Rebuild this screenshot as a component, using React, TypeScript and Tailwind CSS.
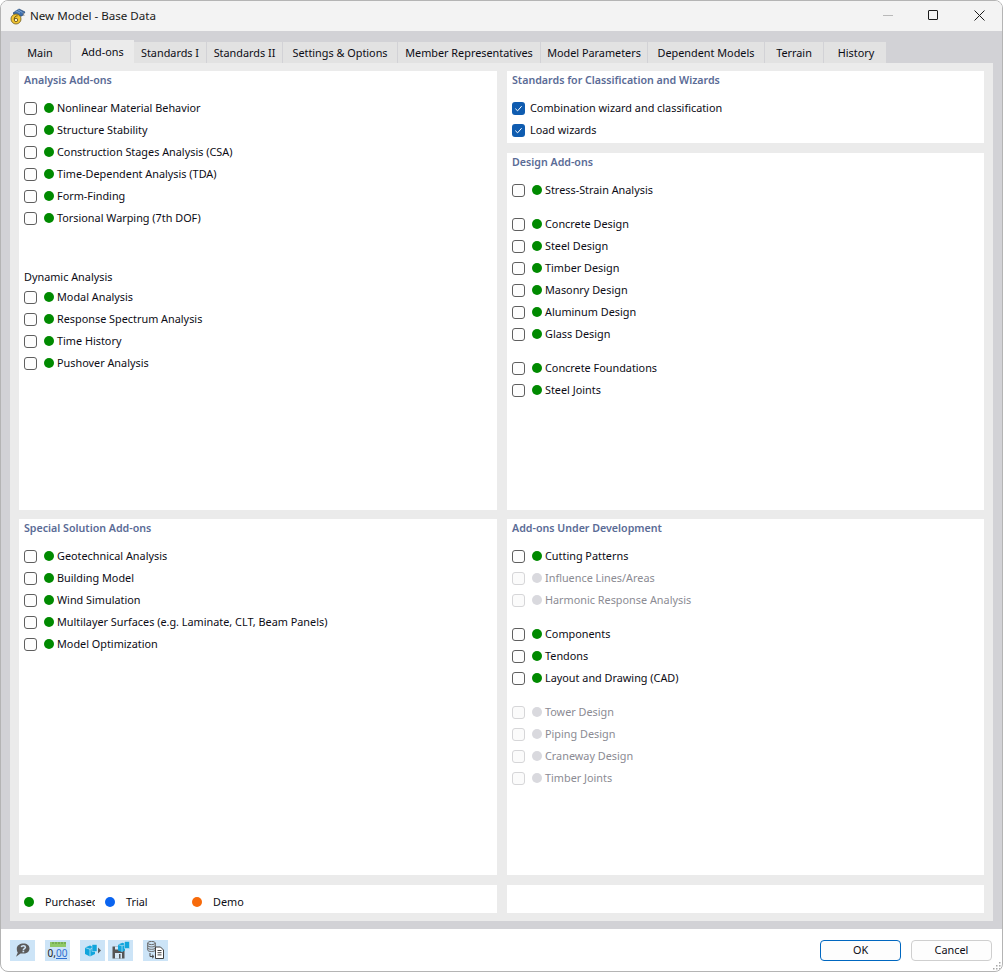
import type { ReactNode } from "react"

const tabs = [
  { name: "Main", w: "w-[61px]" },
  { name: "Add-ons", w: "w-[63px]", active: true },
  { name: "Standards I", w: "w-[73px]" },
  { name: "Standards II", w: "w-[76px]" },
  { name: "Settings & Options", w: "w-[115px]" },
  { name: "Member Representatives", w: "w-[143px]" },
  { name: "Model Parameters", w: "w-[107px]" },
  { name: "Dependent Models", w: "w-[117px]" },
  { name: "Terrain", w: "w-[59px]" },
  { name: "History", w: "w-[63px] pl-[2px]" },
]

function Check({ checked, off }: { checked?: boolean; off?: boolean }) {
  if (checked) {
    return (
      <span className="flex h-[13px] w-[13px] shrink-0 items-center justify-center rounded-[3px] bg-[#0f5cb0]">
        <svg width="9" height="9" viewBox="0 0 10 10" fill="none" stroke="#ffffff" strokeWidth="1.1">
          <path d="M1.5 5.2 L4 7.6 L8.5 2.4" />
        </svg>
      </span>
    )
  }
  return (
    <span
      className={`h-[13px] w-[13px] shrink-0 rounded-[3px] border ${
        off ? "border-[#d6d6d8] bg-[#fbfbfb]" : "border-[#5f5f5f] bg-[#fdfdfd]"
      }`}
    />
  )
}

function Row({ label, off, plain, checked }: { label: string; off?: boolean; plain?: boolean; checked?: boolean }) {
  return (
    <div className="flex h-[22px] items-center">
      <Check off={off} checked={checked} />
      {!plain && (
        <span className={`ml-[7px] h-[10px] w-[10px] shrink-0 rounded-full ${off ? "bg-[#d9d9de]" : "bg-[#008a00]"}`} />
      )}
      <span className={`whitespace-nowrap ${plain ? "ml-[5px]" : "ml-[3px]"} ${off ? "text-[#8b8b93]" : "text-[#0c0c14]"}`}>
        {label}
      </span>
    </div>
  )
}

function Panel({ title, className, children }: { title?: string; className: string; children?: ReactNode }) {
  return (
    <section className={`bg-white pl-[5px] ${className}`}>
      {title && (
        <h2 className="mb-[8px] flex h-[18px] items-center pt-[2px] text-[10.65px] font-semibold text-[#5a6b96]">{title}</h2>
      )}
      {children}
    </section>
  )
}

function Group({ items, off, className = "" }: { items: string[]; off?: boolean; className?: string }) {
  return (
    <div className={className}>
      {items.map((item) => (
        <Row key={item} label={item} off={off} />
      ))}
    </div>
  )
}

function AppIcon() {
  return (
    <svg width="17" height="17" viewBox="0 0 17 17">
      <path d="M4 5 L10 1 L16 4 L13 8 L7 8 Z" fill="#3f6fae" stroke="#23456f" strokeWidth="0.7" />
      <path d="M6 2.5 L11 5 M8.5 1.5 L13.5 4.5" stroke="#9cc0e6" strokeWidth="0.7" />
      <path d="M14 4.5 L15 8" stroke="#8a8a8a" strokeWidth="1" />
      <circle cx="7" cy="11" r="5" fill="#f3c531" stroke="#6d5a1e" strokeWidth="0.8" />
      <circle cx="7" cy="12" r="1.7" fill="#fff3c0" stroke="#5b4a14" strokeWidth="0.8" />
      <path d="M5.2 11.5 C5.2 9 6.5 7.8 8.6 7.8" fill="none" stroke="#5b4a14" strokeWidth="0.9" />
    </svg>
  )
}

function HelpIcon() {
  return (
    <svg width="15" height="14" viewBox="0 0 15 14">
      <path d="M8.5 0.5 C12 0.5 14.5 2.5 14.5 5.5 C14.5 8.6 12 10.5 8.5 10.5 L5.5 10.5 L1 13.8 L2.8 9.5 C2 8.5 1.8 7 1.8 5.5 C1.8 2.5 5 0.5 8.5 0.5 Z" fill="#5b5b5b" />
      <path d="M6.3 4.2 C6.5 2.4 10.3 2.2 10.4 4.2 C10.5 5.6 8.4 5.6 8.3 7" fill="none" stroke="#cfe4f6" strokeWidth="1.5" />
      <rect x="7.5" y="7.6" width="1.7" height="1.7" fill="#cfe4f6" />
    </svg>
  )
}

function UnitsIcon() {
  return (
    <span className="flex h-[17px] w-[17px] flex-col items-center">
      <svg width="16" height="5" viewBox="0 0 16 5" className="shrink-0">
        <rect x="0" y="0" width="16" height="5" fill="#8fc866" />
        <path d="M3 0 V2 M6 0 V2 M9 0 V2 M12 0 V2 M15 0 V2" stroke="#5f9440" strokeWidth="1" />
      </svg>
      <span className="mt-[1px] flex h-[11px] text-[10px] leading-[10px] text-[#1a1a1a]">
        0,<span className="border-b border-[#2f6fd0] text-[#2f6fd0]">00</span>
      </span>
    </span>
  )
}

function ExportIcon() {
  return (
    <svg width="16" height="13" viewBox="0 0 16 13">
      <path d="M0 3.5 L5 1.5 L10 3.5 L10 10 L5 12.5 L0 10 Z" fill="#12a5dc" />
      <path d="M5 5.2 V12.5 M0 3.5 L5 5.2 L10 3.5" stroke="#d6ecf8" strokeWidth="0.7" fill="none" />
      <rect x="7" y="0.5" width="5" height="7" fill="#12a5dc" stroke="#d6ecf8" strokeWidth="0.5" />
      <path d="M13 3.5 L16 6.5 L13 9.5 Z" fill="#5f5f5f" />
    </svg>
  )
}

function SaveIcon() {
  return (
    <svg width="18" height="18" viewBox="0 0 18 18">
      <path d="M0.5 5.5 H10 L12.5 8 V17.5 H0.5 Z" fill="#555555" />
      <rect x="3" y="5.5" width="5" height="3" fill="#d6e8f7" />
      <rect x="3" y="12" width="7" height="5.5" fill="#d6e8f7" />
      <rect x="7" y="13" width="1.5" height="4.5" fill="#555555" />
      <path d="M6 3.5 L10.5 1.8 L13 2.8 L13 9.5 L10 11 L6 9.5 Z" fill="#12a5dc" />
      <path d="M10 4.8 V11 M6 3.5 L10 4.8 L13 3.8" stroke="#d6ecf8" strokeWidth="0.6" fill="none" />
      <rect x="12.5" y="0.5" width="5" height="7" fill="#12a5dc" stroke="#d6ecf8" strokeWidth="0.5" />
    </svg>
  )
}

function DbReportIcon() {
  return (
    <svg width="17" height="18" viewBox="0 0 17 18">
      <ellipse cx="4.5" cy="2" rx="3.8" ry="1.6" fill="none" stroke="#6a6a6a" strokeWidth="1" />
      <path d="M0.7 2 V9 C0.7 11 8.3 11 8.3 9 V2 M0.7 4.4 C0.7 6.4 8.3 6.4 8.3 4.4 M0.7 6.8 C0.7 8.8 8.3 8.8 8.3 6.8" fill="none" stroke="#6a6a6a" strokeWidth="1" />
      <path d="M3 12 V15.5 H6.5 M5 13.8 L7 15.5 L5 17.2" fill="none" stroke="#4a4a4a" strokeWidth="1" />
      <path d="M8.5 6 H13.5 L16.5 9 V17.5 H8.5 Z" fill="#ffffff" stroke="#3f3f3f" strokeWidth="1" />
      <path d="M10.5 9.5 H14.5 M10.5 11.7 H14.5 M10.5 13.9 H14.5" stroke="#3f3f3f" strokeWidth="1" />
    </svg>
  )
}

function ToolButton({ children, className = "" }: { children: ReactNode; className?: string }) {
  return (
    <button className={`flex h-[21px] w-[25px] items-center justify-center bg-[#cce4f7] ${className}`}>{children}</button>
  )
}

export default function App() {
  return (
    <div className="h-[972px] w-[1003px] bg-white font-['Noto_Sans',sans-serif] text-[10.85px] text-[#0c0c14]">
      <div className="relative flex h-full flex-col overflow-hidden rounded-[8px] border border-[#b4b4b4] bg-white">
        {/* title bar */}
        <header className="flex h-[30px] shrink-0 items-center bg-[#f3f3f3] pl-[8px]">
          <AppIcon />
          <span className="ml-[4px] text-[11.6px] text-[#1a1a1a]">New Model - Base Data</span>
          <div className="-mt-[2px] ml-auto flex items-center">
            <span className="mr-[35px] h-px w-[10px] bg-[#b9b9b9]" />
            <span className="mr-[36px] h-[10px] w-[10px] rounded-[1px] border border-[#1a1a1a]" />
            <svg width="11" height="11" viewBox="0 0 11 11" className="mr-[17px]" stroke="#1a1a1a" strokeWidth="1">
              <path d="M0.5 0.5 L10.5 10.5 M10.5 0.5 L0.5 10.5" />
            </svg>
          </div>
        </header>

        {/* dialog body */}
        <main className="flex h-[898px] shrink-0 flex-col bg-[#d2d2d6] px-[9px] pb-[8px] pt-[9px]">
          <nav className="flex h-[23px] shrink-0 items-end">
            {tabs.map((t) => (
              <div
                key={t.name}
                className={`flex shrink-0 items-center justify-center whitespace-nowrap pt-[2px] ${t.w} ${
                  t.active ? "h-[23px] bg-[#ebebeb]" : "h-[21px] border-r border-[#d2d2d6] bg-[#e2e2e2]"
                }`}
              >
                {t.name}
              </div>
            ))}
          </nav>

          <div className="grid flex-1 grid-cols-[478px_477px] grid-rows-[439px_365px_38px] gap-x-[10px] bg-[#ebebeb] pl-[9px] pr-[9px] pt-[8px]">
            <Panel title="Analysis Add-ons" className="">
              <Group
                items={[
                  "Nonlinear Material Behavior",
                  "Structure Stability",
                  "Construction Stages Analysis (CSA)",
                  "Time-Dependent Analysis (TDA)",
                  "Form-Finding",
                  "Torsional Warping (7th DOF)",
                ]}
              />
              <div className="-mb-[1px] mt-[38px] flex h-[20px] items-center">Dynamic Analysis</div>
              <Group items={["Modal Analysis", "Response Spectrum Analysis", "Time History", "Pushover Analysis"]} />
            </Panel>

            <div className="flex flex-col gap-[10px]">
              <Panel title="Standards for Classification and Wizards" className="h-[72px] shrink-0">
                <Row plain checked label="Combination wizard and classification" />
                <Row plain checked label="Load wizards" />
              </Panel>
              <Panel title="Design Add-ons" className="flex-1">
                <Group items={["Stress-Strain Analysis"]} />
                <Group
                  className="mt-[12px]"
                  items={["Concrete Design", "Steel Design", "Timber Design", "Masonry Design", "Aluminum Design", "Glass Design"]}
                />
                <Group className="mt-[12px]" items={["Concrete Foundations", "Steel Joints"]} />
              </Panel>
            </div>

            <Panel title="Special Solution Add-ons" className="mt-[9px]">
              <Group
                items={[
                  "Geotechnical Analysis",
                  "Building Model",
                  "Wind Simulation",
                  "Multilayer Surfaces (e.g. Laminate, CLT, Beam Panels)",
                  "Model Optimization",
                ]}
              />
            </Panel>

            <Panel title="Add-ons Under Development" className="mt-[9px]">
              <Group items={["Cutting Patterns"]} />
              <Group off items={["Influence Lines/Areas", "Harmonic Response Analysis"]} />
              <Group className="mt-[12px]" items={["Components", "Tendons", "Layout and Drawing (CAD)"]} />
              <Group off className="mt-[12px]" items={["Tower Design", "Piping Design", "Craneway Design", "Timber Joints"]} />
            </Panel>

            {/* legend */}
            <div className="mt-[10px] flex h-[28px] items-center bg-white pl-[5px] pt-[6px]">
              <span className="h-[10px] w-[10px] shrink-0 rounded-full bg-[#008a00]" />
              <span className="ml-[11px] w-[50px] shrink-0 overflow-hidden whitespace-nowrap">Purchased</span>
              <span className="ml-[10px] h-[10px] w-[10px] shrink-0 rounded-full bg-[#0a64f0]" />
              <span className="ml-[11px] w-[56px] shrink-0">Trial</span>
              <span className="ml-[10px] h-[10px] w-[10px] shrink-0 rounded-full bg-[#f76a0a]" />
              <span className="ml-[11px]">Demo</span>
            </div>
            <div className="mt-[10px] h-[28px] bg-white" />
          </div>
        </main>

        {/* footer */}
        <footer className="relative flex flex-1 items-center pl-[9px] pr-[10px]">
          <ToolButton>
            <HelpIcon />
          </ToolButton>
          <ToolButton className="ml-[10px]">
            <UnitsIcon />
          </ToolButton>
          <ToolButton className="ml-[10px]">
            <ExportIcon />
          </ToolButton>
          <ToolButton className="ml-[3px]">
            <SaveIcon />
          </ToolButton>
          <ToolButton className="ml-[10px]">
            <DbReportIcon />
          </ToolButton>
          <button className="ml-auto h-[21px] w-[81px] rounded-[4px] border border-[#0067c0] bg-[#fdfdfd] pt-px leading-none">
            OK
          </button>
          <button className="ml-[10px] h-[21px] w-[81px] rounded-[4px] border border-[#cfcfcf] bg-[#fdfdfd] pt-px leading-none">
            Cancel
          </button>
          <svg width="8" height="8" viewBox="0 0 8 8" fill="#a8a8a8" className="absolute bottom-[1px] right-[1px]">
            <rect x="6" y="0" width="1.5" height="1.5" />
            <rect x="3" y="3" width="1.5" height="1.5" />
            <rect x="6" y="3" width="1.5" height="1.5" />
            <rect x="0" y="6" width="1.5" height="1.5" />
            <rect x="3" y="6" width="1.5" height="1.5" />
            <rect x="6" y="6" width="1.5" height="1.5" />
          </svg>
        </footer>
      </div>
    </div>
  )
}
